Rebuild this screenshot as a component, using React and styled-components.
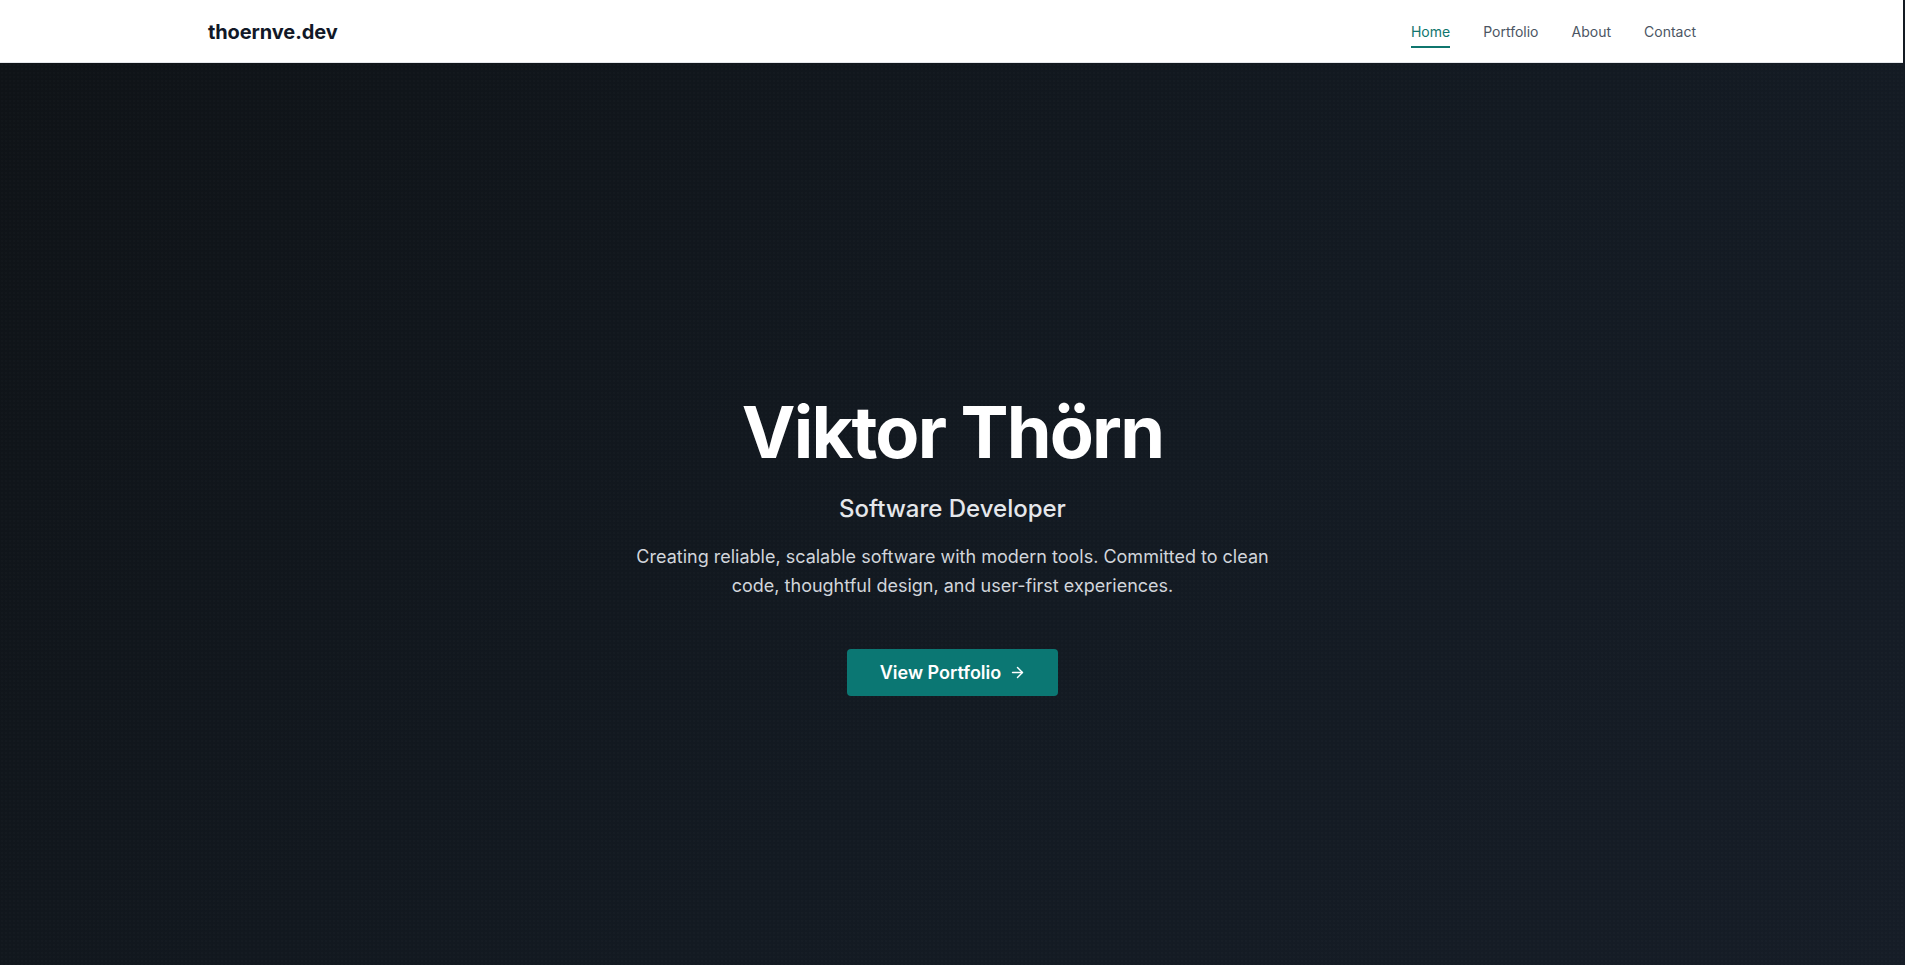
import React from 'react';
import styled, { createGlobalStyle } from 'styled-components';
import { ArrowRight } from 'lucide-react';

const TEAL = '#0f766e';
const BUTTON_TEAL = '#0b7773';
const INK = '#111827';
const NAV_GRAY = '#4b5563';

const GlobalStyle = createGlobalStyle`
  html, body {
    margin: 0;
    padding: 0;
  }
  body {
    font-family: Inter, "Noto Sans", sans-serif;
    background: #141a22;
    -webkit-font-smoothing: antialiased;
  }
  * { box-sizing: border-box; }
`;

const Header = styled.header`
  height: 63px;
  margin-right: 2px;
  background: #fff;
  border-bottom: 1px solid #e5e7eb;
  display: flex;
  align-items: center;
  justify-content: space-between;
  padding: 1px 207px 0 208px;
`;

const Logo = styled.a`
  font-size: 20px;
  font-weight: 700;
  color: ${INK};
  text-decoration: none;
  letter-spacing: -0.1px;
`;

const Nav = styled.nav`
  display: flex;
  gap: 33px;
  align-items: center;
`;

const NavLink = styled.a`
  position: relative;
  font-size: 14px;
  line-height: 20px;
  color: ${({ $active }) => ($active ? TEAL : NAV_GRAY)};
  text-decoration: none;
  padding: 2px 0;

  &::after {
    content: '';
    display: ${({ $active }) => ($active ? 'block' : 'none')};
    position: absolute;
    left: 0;
    right: 0;
    bottom: -4px;
    height: 2px;
    background: ${TEAL};
  }
`;

const Hero = styled.section`
  min-height: 100vh;
  background:
    radial-gradient(rgba(255, 255, 255, 0.012) 1px, transparent 1px) 0 0 / 4px 4px,
    linear-gradient(135deg, #0f1317 0%, #131a22 55%, #161d27 100%);
  display: flex;
  flex-direction: column;
  align-items: center;
  justify-content: center;
  text-align: center;
  padding: 0 24px;
`;

const Title = styled.h1`
  margin: 0 0 25px;
  font-size: 72px;
  line-height: 1;
  font-weight: 700;
  color: #fff;
  letter-spacing: -1.8px;
`;

const Subtitle = styled.h2`
  margin: 0 0 17px;
  font-size: 24px;
  line-height: 32px;
  font-weight: 500;
  color: #e5e7eb;
`;

const Intro = styled.p`
  margin: 0 0 48px;
  max-width: 672px;
  font-size: 18px;
  line-height: 29.5px;
  color: #d1d5db;
`;

const PrimaryButton = styled.a`
  display: inline-flex;
  align-items: center;
  gap: 8px;
  height: 47px;
  padding: 0 32px 0 33px;
  background: ${BUTTON_TEAL};
  color: #fff;
  border-radius: 4px;
  font-size: 18px;
  font-weight: 600;
  text-decoration: none;

  svg {
    width: 17px;
    height: 17px;
  }
`;

export default function App() {
  return (
    <>
      <GlobalStyle />
      <Header>
        <Logo href="#">thoernve.dev</Logo>
        <Nav>
          <NavLink href="#" $active>Home</NavLink>
          <NavLink href="#">Portfolio</NavLink>
          <NavLink href="#">About</NavLink>
          <NavLink href="#">Contact</NavLink>
        </Nav>
      </Header>
      <Hero>
        <Title>Viktor Thörn</Title>
        <Subtitle>Software Developer</Subtitle>
        <Intro>
          Creating reliable, scalable software with modern tools. Committed to clean
          code, thoughtful design, and user-first experiences.
        </Intro>
        <PrimaryButton href="#">
          View Portfolio <ArrowRight strokeWidth={2} />
        </PrimaryButton>
      </Hero>
    </>
  );
}
